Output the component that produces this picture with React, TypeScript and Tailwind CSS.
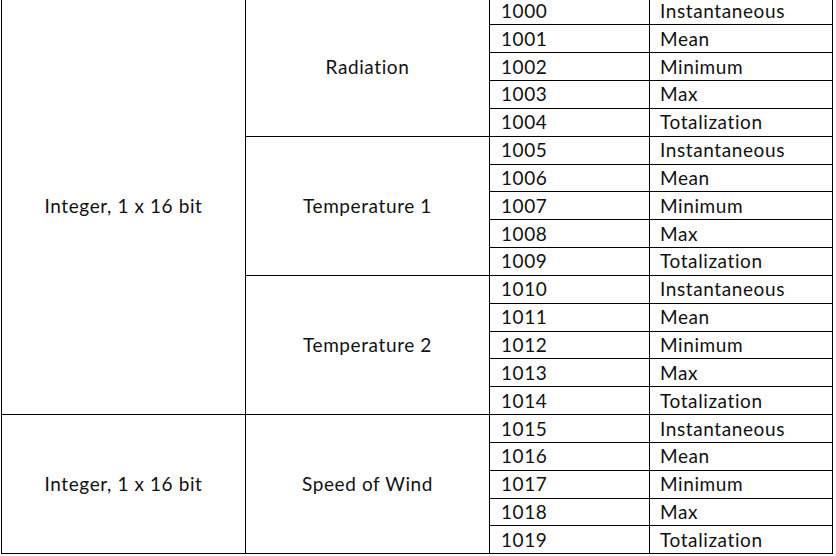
const groups = [
  { type: 'Integer, 1 x 16 bit', params: ['Radiation', 'Temperature 1', 'Temperature 2'] },
  { type: 'Integer, 1 x 16 bit', params: ['Speed of Wind'] },
]

const kinds = ['Instantaneous', 'Mean', 'Minimum', 'Max', 'Totalization']

export default function App() {
  let addr = 1000

  return (
    <div className="w-[836px] h-[556px] overflow-hidden bg-white">
      {/* table: black bg + 1px gaps = cell borders */}
      <div className="ml-px mt-[-3.55px] w-[832px] flex flex-col gap-px p-px bg-black text-[19px] tracking-[0.6px] leading-none text-[#111] font-['Lato','Open_Sans',sans-serif]">
        {groups.map((g, gi) => (
          <div key={gi} className="flex gap-px">
            <div className="w-[243px] bg-white flex items-center justify-center pb-px">{g.type}</div>
            <div className="flex-1 flex flex-col gap-px">
              {g.params.map((p) => (
                <div key={p} className="flex gap-px">
                  <div className="w-[243px] bg-white flex items-center justify-center pb-px">{p}</div>
                  <div className="flex-1 flex flex-col gap-px">
                    {kinds.map((k) => {
                      const a = addr++
                      return (
                        <div key={a} className="h-[26.85px] flex gap-px">
                          <div className="w-[159px] bg-white flex items-center pl-[11px] pb-px">{a}</div>
                          <div className="flex-1 bg-white flex items-center pl-[10px] pb-px">{k}</div>
                        </div>
                      )
                    })}
                  </div>
                </div>
              ))}
            </div>
          </div>
        ))}
      </div>
    </div>
  )
}
